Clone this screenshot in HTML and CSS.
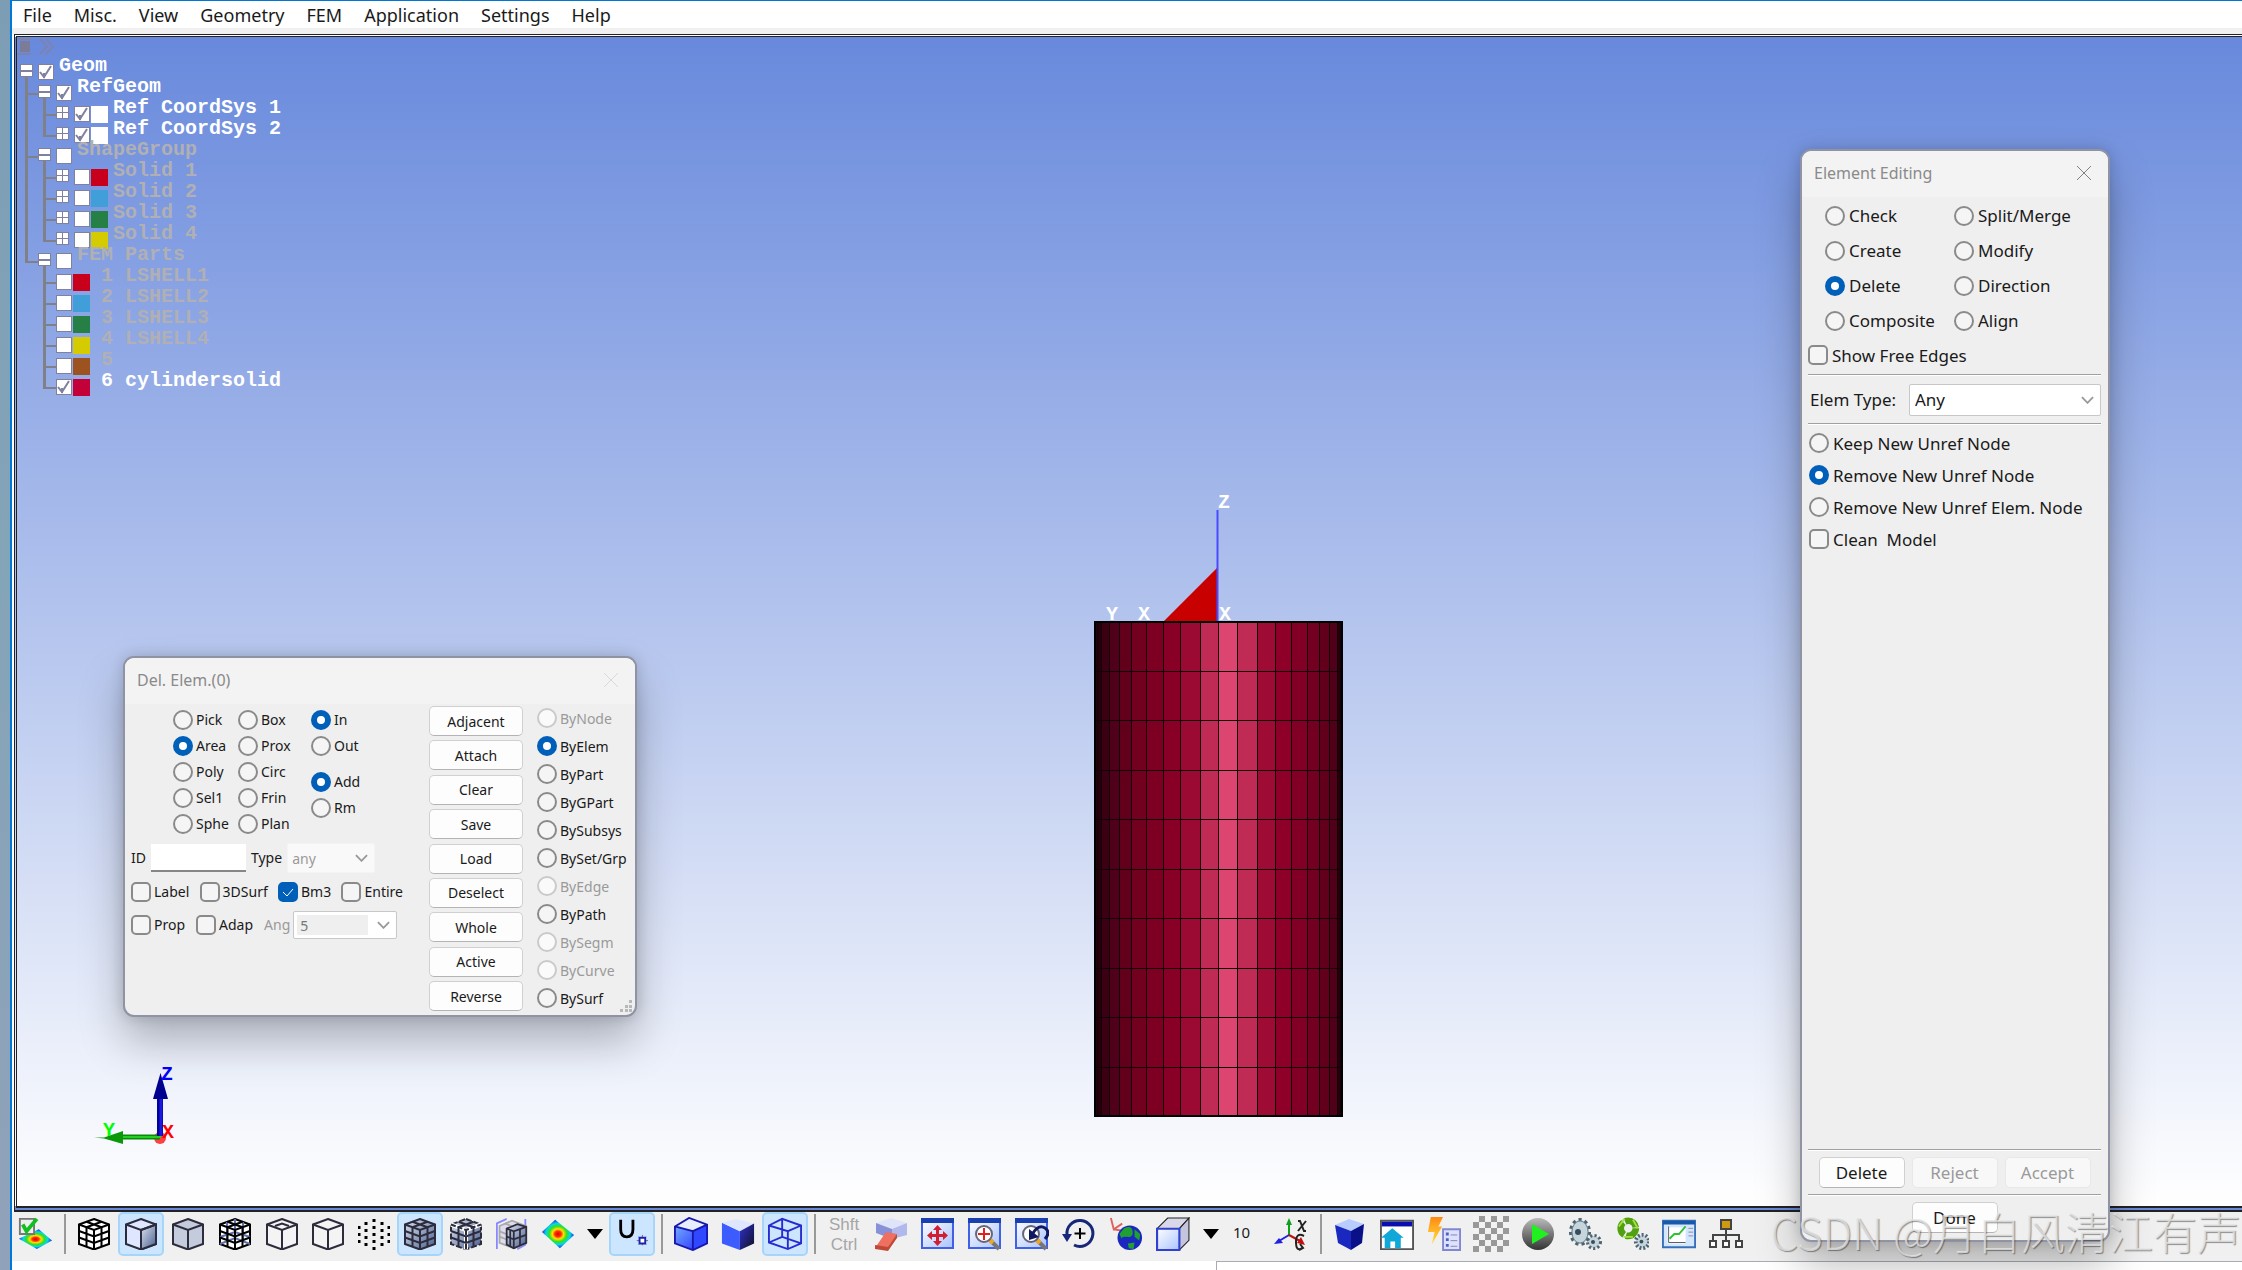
FILE: index.html
```html
<!DOCTYPE html>
<html lang="en">
<head>
  <meta charset="UTF-8" />
  <meta name="viewport" content="width=device-width, initial-scale=1.0" />
  <title>Element Editing</title>
  <link rel="stylesheet" href="styles.css">
</head>
<body>
  <!-- shared icon parts -->
  <svg class="defs" aria-hidden="true">
    <defs>
      <radialGradient id="rainbow">
        <stop offset="0" stop-color="#e00000"/><stop offset=".2" stop-color="#ff3000"/>
        <stop offset=".35" stop-color="#ffe000"/><stop offset=".55" stop-color="#30e020"/>
        <stop offset=".75" stop-color="#00d8e8"/><stop offset="1" stop-color="#2030e0"/>
      </radialGradient>
      <linearGradient id="steel" x1="0" y1="0" x2="1" y2="1"><stop offset="0" stop-color="#dce3f2"/><stop offset="1" stop-color="#4a5f8e"/></linearGradient>
      <linearGradient id="pale" x1="0" y1="0" x2="1" y2="1"><stop offset="0" stop-color="#fff"/><stop offset="1" stop-color="#a9c2ff"/></linearGradient>
      <linearGradient id="blue" x1="0" y1="0" x2="1" y2="1"><stop offset="0" stop-color="#7fc0ff"/><stop offset="1" stop-color="#2020ff"/></linearGradient>
      <linearGradient id="dark" x1="0" y1="0" x2="1" y2="1"><stop offset="0" stop-color="#3030d0"/><stop offset="1" stop-color="#101020"/></linearGradient>
      <linearGradient id="bolt" x1="0" y1="0" x2="0" y2="1"><stop offset="0" stop-color="#ff8a10"/><stop offset="1" stop-color="#ffe040"/></linearGradient>
      <linearGradient id="ball" x1="0" y1="0" x2="0" y2="1"><stop offset="0" stop-color="#bbb"/><stop offset="1" stop-color="#333"/></linearGradient>
      <path id="hex" d="M16 1 31 6.500V26L16 31.500 1 26V6.500Z"/>
      <path id="edges" d="M1 6.500 16 12 31 6.500M16 12V31.500"/>
      <path id="mesh" d="M8.500 3.800 23.500 9.200V28.800M23.500 3.800 8.500 9.200V28.800M1 13 16 18.500 31 13M1 19.500 16 25 31 19.500"/>
      <g id="window">
        <rect x="1" y="2" width="31" height="29" fill="url(#pale)" stroke="#4060e8" stroke-width="2"/>
        <path d="M0 1H33V6H0Z" fill="#1a3fae"/>
      </g>
      <g id="lens">
        <path d="M22 23 31 32" stroke="#777" stroke-width="4"/><path d="M21 22 25 26" stroke="#f0a820" stroke-width="4"/>
        <circle cx="16" cy="17" r="8" fill="#fff" stroke="#667" stroke-width="2"/>
      </g>
      <g id="gear">
        <ellipse cx="12" cy="15" rx="9" ry="12" fill="#b9cad2" stroke="#4d6470" stroke-width="4" stroke-dasharray="3 3"/>
        <ellipse cx="12" cy="15" rx="8" ry="11" fill="#c6d5dc" stroke="#6f8794"/><circle cx="10" cy="15" r="3" fill="#3b4d58"/>
        <circle cx="26" cy="25" r="6" fill="#b9cad2" stroke="#4d6470" stroke-width="4" stroke-dasharray="2 2"/>
        <circle cx="26" cy="25" r="5" fill="#c6d5dc"/><circle cx="25" cy="25" r="2" fill="#3b4d58"/>
      </g>
    </defs>
  </svg>

  <div class="desktop-edge"></div>

  <div class="app">
    <nav class="menubar">
      <a href="#">File</a>
      <a href="#">Misc.</a>
      <a href="#">View</a>
      <a href="#">Geometry</a>
      <a href="#">FEM</a>
      <a href="#">Application</a>
      <a href="#">Settings</a>
      <a href="#">Help</a>
    </nav>

    <main class="viewport">
      <div class="tree-tools">
        <svg width="40" height="18" viewBox="0 0 40 18" fill="none" stroke="#7d83b0">
          <path d="M0 2H14M0 17H14" stroke-width="2"/><path d="M3 4H13V15H3Z" fill="#7c7c98" stroke="none"/>
          <path d="M23 2 30 9.500 23 17M29 2 36 9.500 29 17" stroke-width="2"/>
        </svg>
      </div>

      <ul class="tree">
        <li>
          <div class="node on"><button class="toggle minus" aria-label="Collapse"></button><input type="checkbox" id="t0" checked><label for="t0">Geom</label></div>
          <ul>
            <li>
              <div class="node on"><button class="toggle minus" aria-label="Collapse"></button><input type="checkbox" id="t1" checked><label for="t1">RefGeom</label></div>
              <ul>
                <li><div class="node on"><button class="toggle plus" aria-label="Expand"></button><input type="checkbox" id="t2" checked><span class="swatch white"></span><label for="t2">Ref CoordSys 1</label></div></li>
                <li><div class="node on"><button class="toggle plus" aria-label="Expand"></button><input type="checkbox" id="t3" checked><span class="swatch white"></span><label for="t3">Ref CoordSys 2</label></div></li>
              </ul>
            </li>
            <li>
              <div class="node"><button class="toggle minus" aria-label="Collapse"></button><input type="checkbox" id="t4"><label for="t4">ShapeGroup</label></div>
              <ul>
                <li><div class="node"><button class="toggle plus" aria-label="Expand"></button><input type="checkbox" id="t5"><span class="swatch red"></span><label for="t5">Solid 1</label></div></li>
                <li><div class="node"><button class="toggle plus" aria-label="Expand"></button><input type="checkbox" id="t6"><span class="swatch sky"></span><label for="t6">Solid 2</label></div></li>
                <li><div class="node"><button class="toggle plus" aria-label="Expand"></button><input type="checkbox" id="t7"><span class="swatch green"></span><label for="t7">Solid 3</label></div></li>
                <li><div class="node"><button class="toggle plus" aria-label="Expand"></button><input type="checkbox" id="t8"><span class="swatch yellow"></span><label for="t8">Solid 4</label></div></li>
              </ul>
            </li>
            <li>
              <div class="node"><button class="toggle minus" aria-label="Collapse"></button><input type="checkbox" id="t9"><label for="t9">FEM Parts</label></div>
              <ul class="parts">
                <li><div class="node"><input type="checkbox" id="p1"><span class="swatch red"></span><label for="p1">1 LSHELL1</label></div></li>
                <li><div class="node"><input type="checkbox" id="p2"><span class="swatch sky"></span><label for="p2">2 LSHELL2</label></div></li>
                <li><div class="node"><input type="checkbox" id="p3"><span class="swatch green"></span><label for="p3">3 LSHELL3</label></div></li>
                <li><div class="node"><input type="checkbox" id="p4"><span class="swatch yellow"></span><label for="p4">4 LSHELL4</label></div></li>
                <li><div class="node"><input type="checkbox" id="p5"><span class="swatch brown"></span><label for="p5">5</label></div></li>
                <li><div class="node on"><input type="checkbox" id="p6" checked><span class="swatch crimson"></span><label for="p6">6 cylindersolid</label></div></li>
              </ul>
            </li>
          </ul>
        </li>
      </ul>

      <!-- meshed cylinder -->
      <svg class="model" width="260" height="640" viewBox="1090 485 260 640">
        <path d="M1164 621 1217 568V621Z" fill="#c80000"/>
        <path d="M1217.500 510V621" stroke="#4a4aff" stroke-width="2"/>
        <g class="axis-name" fill="#fff">
          <text x="1218" y="508">Z</text><text x="1106" y="620">Y</text><text x="1138" y="620">X</text><text x="1219" y="620">X</text>
        </g>
        <g shape-rendering="crispEdges">
          <rect x="1094" y="621" width="249" height="496" fill="#250009"/>
          <rect x="1101" y="621" width="8" height="496" fill="#3c0013"/>
          <rect x="1109" y="621" width="10" height="496" fill="#500019"/>
          <rect x="1119" y="621" width="12" height="496" fill="#62001c"/>
          <rect x="1131" y="621" width="15" height="496" fill="#72001f"/>
          <rect x="1146" y="621" width="17" height="496" fill="#7d0023"/>
          <rect x="1163" y="621" width="17" height="496" fill="#880026"/>
          <rect x="1180" y="621" width="20" height="496" fill="#9a0a32"/>
          <rect x="1200" y="621" width="18" height="496" fill="#c02b56"/>
          <rect x="1218" y="621" width="19" height="496" fill="#dd4571"/>
          <rect x="1237" y="621" width="20" height="496" fill="#c02b56"/>
          <rect x="1257" y="621" width="18" height="496" fill="#9e0b35"/>
          <rect x="1275" y="621" width="16" height="496" fill="#8f0029"/>
          <rect x="1291" y="621" width="16" height="496" fill="#820025"/>
          <rect x="1307" y="621" width="12" height="496" fill="#740021"/>
          <rect x="1319" y="621" width="10" height="496" fill="#62001c"/>
          <rect x="1329" y="621" width="8" height="496" fill="#500019"/>
          <path d="M1097 621V1117M1101 621V1117M1109 621V1117M1119 621V1117M1131 621V1117M1146 621V1117M1163 621V1117M1180 621V1117M1200 621V1117M1218 621V1117M1237 621V1117M1257 621V1117M1275 621V1117M1291 621V1117M1307 621V1117M1319 621V1117M1329 621V1117M1337 621V1117M1340 621V1117" stroke="#12000a" stroke-width="1"/>
          <path d="M1094 671H1343M1094 720H1343M1094 770H1343M1094 819H1343M1094 869H1343M1094 918H1343M1094 968H1343M1094 1017H1343M1094 1067H1343" stroke="#12000a" stroke-width="1"/>
          <rect x="1095" y="622" width="247" height="494" fill="none" stroke="#000" stroke-width="2"/>
        </g>
      </svg>

      <!-- orientation triad -->
      <svg class="triad" width="90" height="90" viewBox="90 1060 90 90">
        <circle cx="160" cy="1138" r="6" fill="#ff4040"/>
        <path d="M160 1137H123" stroke="#0a8a0a" stroke-width="5"/><path d="M161 1137H123" stroke="#20d020" stroke-width="2"/>
        <path d="M94 1137.500H104L123 1131V1144L104 1138.500" fill="#0a980a"/>
        <path d="M160 1136V1098" stroke="#00009a" stroke-width="6"/><path d="M161 1136V1098" stroke="#1a1ae0" stroke-width="3"/>
        <path d="M160.500 1073 153 1099H168Z" fill="#000090"/>
        <g class="axis-name"><text x="161" y="1080" fill="#0000ff">Z</text><text x="103" y="1136" fill="#00ff00">Y</text><text x="162" y="1138" fill="#ff0000">X</text></g>
      </svg>
    </main>

    <footer class="toolbar">
      <div class="tools">
        <button class="tool first" aria-label="Contour check"><svg viewBox="0 0 36 36"><path d="M1 23 22 13 36 25 20 34Z" fill="url(#rainbow)"/><path d="M2 2H17V18H2Z" fill="#eee" stroke="#777" stroke-width="2"/><path d="M5 8 9 15 20 2" fill="none" stroke="#10c020" stroke-width="4"/></svg></button>
      </div>
      <span class="sep"></span>
      <div class="tools spaced">
        <button class="tool" aria-label="Wireframe mesh"><svg viewBox="0 0 32 32" class="line black"><use href="#hex" fill="#fff"/><use href="#edges"/><use href="#mesh"/></svg></button>
        <button class="tool active" aria-label="Shaded"><svg viewBox="0 0 32 32" class="line"><use href="#hex" fill="#dfe6ff"/><path d="M16 12 31 6.500V26L16 31.500Z" fill="url(#steel)"/><use href="#edges"/></svg></button>
        <button class="tool" aria-label="Flat"><svg viewBox="0 0 32 32" class="line"><use href="#hex" fill="#c3cbdc"/><use href="#edges"/></svg></button>
        <button class="tool" aria-label="Transparent mesh"><svg viewBox="0 0 32 32" class="line black"><use href="#hex" fill="#fff"/><path d="M1 26 16 20 31 26M16 1V20M8 4V24M24 4V24M1 19 16 14 31 19" stroke="#6070a8"/><use href="#edges"/><use href="#mesh"/></svg></button>
        <button class="tool" aria-label="Feature edges"><svg viewBox="0 0 32 32" class="line"><use href="#hex" fill="#f4f4f4"/><use href="#edges"/><path d="M9 8 16 5.500 23 8"/></svg></button>
      </div>
      <div class="tools">
        <button class="tool" aria-label="Outline"><svg viewBox="0 0 32 32" class="line"><use href="#hex" fill="#f4f4f4"/><use href="#edges"/></svg></button>
        <button class="tool" aria-label="Nodes"><svg viewBox="0 0 32 32" class="line black dots"><path d="M1 8V27M8 4V30M16 1V32M24 4V30M31 8V27"/></svg></button>
        <button class="tool active" aria-label="Shaded mesh"><svg viewBox="0 0 32 32" class="line"><use href="#hex" fill="url(#steel)"/><use href="#edges"/><use href="#mesh"/></svg></button>
        <button class="tool" aria-label="Shrink"><svg viewBox="0 0 32 32" class="line"><use href="#hex" fill="url(#steel)" stroke-dasharray="6 2"/><use href="#edges" stroke="#fff" stroke-width="4"/><use href="#mesh"/><use href="#edges" stroke-dasharray="5 2"/></svg></button>
        <button class="tool" aria-label="Section"><svg viewBox="0 0 36 36" class="line"><path d="M1 35V6L12 1M33 1V30L24 35" stroke="#8888ff" fill="none"/><path d="M4 9 18 3 34 9V28L20 34 4 28Z" fill="#dde" stroke="#aaa"/><path d="M4 15 14 19M4 21 14 25M10 6 24 12" stroke="#aaa"/><path d="M12 12 24 7 34 10V28L20 34 12 30Z" fill="url(#steel)"/><path d="M12 12 20 15 34 10M20 15V34M27 12V31M12 21 20 24 34 19M16 13V32"/></svg></button>
        <button class="tool" aria-label="Contour"><svg viewBox="0 0 36 32"><path d="M15 1 35 17 20 31 1 14Z" fill="url(#rainbow)"/></svg></button>
        <button class="drop" aria-label="More contours"></button>
        <button class="tool active" aria-label="Undeformed"><svg viewBox="0 0 36 34"><path d="M6 2V12Q6 20 12.500 20T19 12V2" fill="none" stroke="#000" stroke-width="3"/><path d="M29 18V29M23 24H35M25 20 33 28M33 20 25 28" stroke="#667" /><path d="M26 21H32V27H26Z" fill="#fff" stroke="#2020b0" stroke-width="2"/></svg></button>
      </div>
      <span class="sep"></span>
      <div class="tools spaced">
        <button class="tool" aria-label="Solid with edges"><svg viewBox="0 0 36 36"><path d="M1 10 16 1 35 8V28L20 35 1 28Z" fill="url(#blue)"/><path d="M1 10 16 1 35 8 20 15Z" fill="#e6eeff"/><path d="M20 15 35 8V28L20 35Z" fill="#3048ff"/><path d="M1 10 16 1 35 8V28L20 35 1 28ZM1 10 20 15 35 8M20 15V35" fill="none" stroke="#1818b0" stroke-width="2"/></svg></button>
        <button class="tool" aria-label="Solid"><svg viewBox="0 0 36 34"><path d="M1 5 20 14V34L1 27Z" fill="#3c5cff"/><path d="M1 5 16 1 35 6 20 14Z" fill="#dfe6ff"/><path d="M20 14 35 6V27L20 34Z" fill="url(#dark)"/></svg></button>
        <button class="tool active" aria-label="Wireframe solid"><svg viewBox="0 0 36 34" fill="none" stroke="#2a2ad0" stroke-width="2"><path d="M1 8 15 1 35 8V27L21 33 1 26ZM1 8 21 14 35 8M21 14V33M15 1V20L1 26M15 20 35 27"/></svg></button>
      </div>
      <span class="sep"></span>
      <div class="tools spaced">
        <div class="modkeys"><span>Shft</span><span>Ctrl</span></div>
        <button class="tool" aria-label="Erase"><svg viewBox="0 0 34 34"><path d="M2 6 17 1 33 6 18 12Z" fill="#dfe4fa"/><path d="M2 6 18 12V22L2 16Z" fill="#8890d8"/><path d="M18 12 33 6V18L18 22Z" fill="#b0b8ec"/><path d="M12 15 23 17 14 33 1 31Z" fill="#ee7060"/><path d="M1 28 14 30 23 17V21L14 34 1 32Z" fill="#c04838"/></svg></button>
        <button class="tool" aria-label="Fit view"><svg viewBox="0 0 34 34"><use href="#window"/><path d="M16.500 8 21 13H18V17H22V14L27 18.500 22 23V20H18V24H21L16.500 29 12 24H15V20H11V23L6 18.500 11 14V17H15V13H12Z" fill="#d02030"/></svg></button>
        <button class="tool" aria-label="Zoom"><svg viewBox="0 0 34 34"><use href="#window"/><use href="#lens"/><path d="M16 11V23M10 17H22" stroke="#e02020" stroke-width="2"/></svg></button>
        <button class="tool" aria-label="Previous zoom"><svg viewBox="0 0 34 34"><use href="#window"/><use href="#lens"/><path d="M18 16Q24 7 30 11T30 22" fill="none" stroke="#101860" stroke-width="3"/><path d="M14 12V23L24 20Z" fill="#101860"/></svg></button>
        <button class="tool" aria-label="Rotate"><svg viewBox="0 0 34 34"><path d="M5 18A13 13 0 1 1 12 28" fill="none" stroke="#182878" stroke-width="3"/><path d="M0 17H10L5 25Z" fill="#182878"/><path d="M18 11V22M12.500 16.500H23.500" stroke="#000" stroke-width="2"/></svg></button>
        <button class="tool" aria-label="World axes"><svg viewBox="0 0 36 36"><path d="M2 1 5 13 14 7M5 13 16 15" fill="none" stroke="#e06060" stroke-width="2"/><circle cx="22" cy="22" r="13" fill="#1a28c0"/><path d="M16 12Q24 8 25 15T19 21 14 24 11 18ZM27 13 33 18 32 25 27 21ZM20 28 27 27 26 34 21 33Z" fill="#20a030"/></svg></button>
        <button class="tool" aria-label="View cube"><svg viewBox="0 0 32 32" stroke="#222" stroke-width="1"><path d="M1 11 11 1H31L22 11Z" fill="#d8d8e8"/><path d="M22 11 31 1V22L22 31Z" fill="#c4c4dc"/><path d="M1 11H22V31H1Z" fill="url(#pale)" stroke="#3040d0" stroke-width="2"/></svg></button>
        <button class="drop" aria-label="More views"></button>
      </div>
      <span class="step">10</span>
      <button class="tool axes" aria-label="Rotate about X"><svg viewBox="0 0 34 34"><path d="M15 18V5" stroke="#10a020" stroke-width="2"/><path d="M12 8 15 1 18 8Z" fill="#10a020"/><path d="M15 18 5 24" stroke="#2020e0" stroke-width="2"/><path d="M0 27 5 21 9 26Z" fill="#2020e0"/><path d="M15 18 26 24" stroke="#c01010" stroke-width="2"/><path d="M31 28 27 20 23 26Z" fill="#c01010"/><path d="M24 4H26L30 14H32M32 4 24 14M30 19Q22 15 22 25T28 31M25 33 29 31 26 27" fill="none" stroke="#222" stroke-width="2"/></svg></button>
      <span class="sep"></span>
      <div class="tools spaced">
        <button class="tool" aria-label="Block"><svg viewBox="0 0 32 34"><path d="M1 8 15 2 30 7 17 14Z" fill="#b9ccff"/><path d="M1 8 17 14V33L4 26Z" fill="#1a28c0"/><path d="M17 14 30 7 28 26 17 33Z" fill="#0a1088"/></svg></button>
        <button class="tool" aria-label="Home window"><svg viewBox="0 0 36 34"><path d="M1 3H35V33H1Z" fill="#fff" stroke="#555" stroke-width="2"/><path d="M2 4H34V9H2Z" fill="#0a10b0"/><path d="M13 11 25 21H22V32H16V25H11V32H5V21H1Z" fill="#10a8d8"/></svg></button>
        <button class="tool" aria-label="Quick list"><svg viewBox="0 0 36 36"><path d="M4 0H17L12 10H16L5 29 8 16H1Z" fill="url(#bolt)"/><path d="M17 13H35V35H17Z" fill="#dde0ff" stroke="#8088d0" stroke-width="2"/><path d="M20 18H23M20 24H23M20 30H23" stroke="#5060c0" stroke-width="3"/><path d="M25 19H32M25 25H32M25 31H32" stroke="#8088a0"/></svg></button>
        <button class="tool" aria-label="Checker"><span class="checker"></span></button>
        <button class="tool" aria-label="Run"><svg viewBox="0 0 34 34"><circle cx="17" cy="17" r="16" fill="url(#ball)"/><path d="M11 7 28 17 11 27Z" fill="#20f020"/></svg></button>
        <button class="tool" aria-label="Settings"><svg viewBox="0 0 34 34"><use href="#gear"/></svg></button>
        <button class="tool" aria-label="Update"><svg viewBox="0 0 36 36"><g transform="translate(3 3)"><circle cx="26" cy="23" r="7" fill="#c6d5dc" stroke="#4d6470" stroke-width="4" stroke-dasharray="2 2"/><circle cx="25" cy="23" r="2" fill="#3b4d58"/></g><circle cx="14" cy="12" r="8" fill="#efefef" stroke="#50a010" stroke-width="7" stroke-dasharray="15 2"/><path d="M4 10 10 2M19 3 24 12M9 21H19" stroke="#a0e040" stroke-width="2"/></svg></button>
        <button class="tool" aria-label="Graph"><svg viewBox="0 0 36 30"><path d="M1 1H35V29H1Z" fill="#d4e6ff" stroke="#3870b8" stroke-width="2"/><path d="M1 1H35V5H1Z" fill="#1858a8"/><path d="M6 8H25V25H6Z" fill="#fff"/><path d="M7 7V24H25" fill="none" stroke="#555"/><path d="M8 20 13 15H18L25 7" fill="none" stroke="#30c030" stroke-width="2"/><path d="M28 9H33M28 13H33M28 17H33" stroke="#889"/></svg></button>
        <button class="tool" aria-label="Hierarchy"><svg viewBox="0 0 34 30" fill="none" stroke="#444" stroke-width="2"><path d="M12 1H22V10H12Z" fill="#d09a10"/><path d="M17 10V21M4 21V16H30V21"/><path d="M1 22H7V28H1ZM14 22H20V28H14ZM27 22H33V28H27Z" fill="#fff"/></svg></button>
      </div>
    </footer>
    <div class="below"><span class="below-pane"></span></div>
  </div>

  <!-- selection dialog -->
  <section class="dialog del-elem">
    <header><h2>Del. Elem.(0)</h2><button class="close" aria-label="Close" disabled><svg viewBox="0 0 16 16"><path d="M1 1 15 15M15 1 1 15"/></svg></button></header>
    <div class="del-body">
      <div class="del-left">
        <div class="picks">
          <div class="stack">
            <label><input type="radio" name="pick">Pick</label>
            <label><input type="radio" name="pick" checked>Area</label>
            <label><input type="radio" name="pick">Poly</label>
            <label><input type="radio" name="pick">Sel1</label>
            <label><input type="radio" name="pick">Sphe</label>
          </div>
          <div class="stack wide">
            <label><input type="radio" name="pick">Box</label>
            <label><input type="radio" name="pick">Prox</label>
            <label><input type="radio" name="pick">Circ</label>
            <label><input type="radio" name="pick">Frin</label>
            <label><input type="radio" name="pick">Plan</label>
          </div>
          <div class="stack">
            <label><input type="radio" name="side" checked>In</label>
            <label><input type="radio" name="side">Out</label>
            <label class="apart"><input type="radio" name="mode" checked>Add</label>
            <label><input type="radio" name="mode">Rm</label>
          </div>
        </div>
        <div class="id-row">
          <label for="elem-id">ID</label><input type="text" id="elem-id">
          <label for="elem-kind">Type</label><select id="elem-kind" disabled><option>any</option></select>
        </div>
        <div class="checks">
          <label><input type="checkbox">Label</label>
          <label><input type="checkbox">3DSurf</label>
          <label><input type="checkbox" checked>Bm3</label>
          <label><input type="checkbox">Entire</label>
        </div>
        <div class="checks second">
          <label><input type="checkbox">Prop</label>
          <label><input type="checkbox">Adap</label>
          <span class="angle"><label for="angle" class="off">Ang</label><select id="angle" disabled><option>5</option></select></span>
        </div>
      </div>
      <div class="actions">
        <button>Adjacent</button>
        <button>Attach</button>
        <button>Clear</button>
        <button>Save</button>
        <button>Load</button>
        <button>Deselect</button>
        <button>Whole</button>
        <button>Active</button>
        <button>Reverse</button>
      </div>
      <div class="by">
        <label class="off"><input type="radio" name="by" disabled>ByNode</label>
        <label><input type="radio" name="by" checked>ByElem</label>
        <label><input type="radio" name="by">ByPart</label>
        <label><input type="radio" name="by">ByGPart</label>
        <label><input type="radio" name="by">BySubsys</label>
        <label><input type="radio" name="by">BySet/Grp</label>
        <label class="off"><input type="radio" name="by" disabled>ByEdge</label>
        <label><input type="radio" name="by">ByPath</label>
        <label class="off"><input type="radio" name="by" disabled>BySegm</label>
        <label class="off"><input type="radio" name="by" disabled>ByCurve</label>
        <label><input type="radio" name="by">BySurf</label>
      </div>
    </div>
    <svg class="grip" viewBox="0 0 12 12" fill="#b8b8b8"><path d="M9 0H12V3H9ZM9 5H12V8H9ZM5 5H8V8H5ZM9 9H12V12H9ZM5 9H8V12H5ZM0 9H3V12H0Z"/></svg>
  </section>

  <!-- element editing dialog -->
  <section class="dialog editing">
    <header><h2>Element Editing</h2><button class="close" aria-label="Close"><svg viewBox="0 0 16 16"><path d="M1 1 15 15M15 1 1 15"/></svg></button></header>
    <div class="edit-body">
      <div class="modes">
        <label><input type="radio" name="op">Check</label>
        <label><input type="radio" name="op">Split/Merge</label>
        <label><input type="radio" name="op">Create</label>
        <label><input type="radio" name="op">Modify</label>
        <label><input type="radio" name="op" checked>Delete</label>
        <label><input type="radio" name="op">Direction</label>
        <label><input type="radio" name="op">Composite</label>
        <label><input type="radio" name="op">Align</label>
      </div>
      <label class="free-edges"><input type="checkbox">Show Free Edges</label>
      <hr>
      <div class="elem-type"><label for="elem-type">Elem Type:</label><select id="elem-type"><option>Any</option></select></div>
      <hr>
      <div class="unref">
        <label><input type="radio" name="unref">Keep New Unref Node</label>
        <label><input type="radio" name="unref" checked>Remove New Unref Node</label>
        <label><input type="radio" name="unref">Remove New Unref Elem. Node</label>
        <label class="clean"><input type="checkbox">Clean&nbsp; Model</label>
      </div>
      <div class="edit-foot">
        <hr>
        <div class="buttons"><button>Delete</button><button disabled>Reject</button><button disabled>Accept</button></div>
        <hr>
        <div class="buttons"><button>Done</button></div>
      </div>
    </div>
  </section>

  <div class="watermark">CSDN @月白风清江有声</div>
</body>
</html>
```
FILE: styles.css
```css
:root {
  --ui: "Noto Sans", "Open Sans", sans-serif;
  --panel: #efefef;
  --accent: #005fb8;
  --ink: #1a1a1a;
  --muted: #9a9a9a;
}

* {
  box-sizing: border-box;
}

body {
  margin: 0;
  height: 100vh;
  display: flex;
  overflow: hidden;
  position: relative;
  font-family: var(--ui);
  color: var(--ink);
  background: #fff;
}

button,
input,
select {
  font: inherit;
  color: inherit;
  margin: 0;
}

.defs {
  position: absolute;
  width: 0;
  height: 0;
}

.desktop-edge {
  width: 10px;
  background: linear-gradient(#7c9db4, #84a4b8 45%, #90a2ba);
}

.app {
  flex: 1;
  min-width: 0;
  display: flex;
  flex-direction: column;
  border-left: 2px solid #0078d7;
  border-top: 1px solid #0078d7;
}

/* menu */
.menubar {
  display: flex;
  gap: 22px;
  padding-left: 11px;
  height: 33px;
  border-bottom: 6px solid #f0f0f0;
  font-size: 18px;
  line-height: 28px;
}

.menubar a {
  color: var(--ink);
  text-decoration: none;
}

/* 3d view */
.viewport {
  flex: 1;
  margin-left: 2px;
  position: relative;
  border: 3px double #222;
  border-right: 0;
  border-bottom: 6px double #222;
  background: linear-gradient(#6889dc, #fff);
}

.model {
  position: absolute;
  left: 1073px;
  top: 448px;
}

.triad {
  position: absolute;
  left: 73px;
  bottom: 56px;
}

.axis-name {
  font: bold 20px "Liberation Mono", monospace;
}

/* tree */
.tree-tools {
  height: 18px;
}

.tree-tools svg {
  display: block;
}

.tree,
.tree ul {
  list-style: none;
  margin: 0;
  padding: 0;
}

.tree {
  padding-left: 3px;
  font: bold 20px/22px "Liberation Mono", monospace;
  width: 320px;
}

.tree ul {
  padding-left: 18px;
}

.tree li {
  position: relative;
}

.tree ul > li::before {
  content: "";
  position: absolute;
  left: -13px;
  top: 0;
  width: 13px;
  height: 17px;
  border-left: 3px solid #808088;
  border-bottom: 2px solid #808088;
}

.tree ul > li:not(:last-child)::after {
  content: "";
  position: absolute;
  left: -13px;
  top: 0;
  bottom: 0;
  width: 3px;
  background: #808088;
}

.node {
  display: flex;
  align-items: flex-start;
  height: 21px;
  color: #b0b0b4;
  position: relative;
  z-index: 1;
}

.node.on {
  color: #fff;
}

.toggle {
  width: 13px;
  height: 13px;
  margin: 9px 5px 0 0;
  padding: 0;
  border: 1px solid #8080a0;
  background: #fff linear-gradient(#8080a0, #8080a0) center / 100% 2px no-repeat;
}

.toggle.plus {
  background: linear-gradient(#8080a0, #8080a0) center / 100% 1px no-repeat, linear-gradient(#8080a0, #8080a0) center / 1px 100% no-repeat, #fff;
}

.node input {
  appearance: none;
  width: 16px;
  height: 16px;
  margin: 9px 0 0;
  border: 1px solid #8080a0;
  background: #fff;
}

.node input:checked {
  background: #fff url("data:image/svg+xml,%3Csvg xmlns='http://www.w3.org/2000/svg' viewBox='0 0 14 14'%3E%3Cpath d='M1 7 5 12 12 1M5 13V8' fill='none' stroke='%238080a0' stroke-width='2'/%3E%3C/svg%3E");
}

.swatch {
  width: 17px;
  height: 17px;
  margin: 9px 0 0 1px;
}

.swatch.white { background: #fff; }
.swatch.red { background: #c8001c; }
.swatch.sky { background: #409fd8; }
.swatch.green { background: #268045; }
.swatch.yellow { background: #d4cc00; }
.swatch.brown { background: #9c5320; }
.swatch.crimson { background: #c40038; }

.node label {
  margin-left: 5px;
  white-space: pre;
}

.parts .node label {
  margin-left: 11px;
}

/* toolbar */
.toolbar {
  display: flex;
  height: 49px;
  background: #f0f0f0;
  align-items: flex-start;
}

.tools {
  display: flex;
}

.tools.spaced {
  gap: 1px;
}

.tool {
  width: 46px;
  height: 44px;
  padding: 0;
  display: grid;
  place-items: center;
  border: 2px solid transparent;
  border-radius: 5px;
  background: none;
}

.tool svg {
  width: 34px;
  height: 34px;
}

.tool svg.line {
  width: 32px;
  height: 32px;
  fill: none;
  stroke: #2c2c3c;
  stroke-width: 2;
}

.tool svg.black {
  stroke: #000;
}

.tool svg.dots {
  stroke-width: 3;
  stroke-dasharray: 3 4;
}

.tool.active {
  background: #cce6ff;
  border-color: #a6d5fb;
}

.sep {
  width: 2px;
  height: 40px;
  margin: 2px 5px 0 6px;
  background: #999;
}

.tools .drop {
  width: 28px;
  height: 44px;
  padding: 0;
  border: 0;
  background: none;
  display: grid;
  place-items: center;
}

.drop::before {
  content: "";
  border: 8px solid transparent;
  border-top: 10px solid #000;
  border-bottom: 0;
}

.modkeys {
  width: 46px;
  display: flex;
  flex-direction: column;
  align-items: center;
  font: 17px/20px "Liberation Sans", sans-serif;
  color: #a6a6a6;
  padding-top: 3px;
}

.step {
  font-size: 15px;
  line-height: 40px;
  margin: 0 18px 0 8px;
}

.checker {
  width: 36px;
  height: 36px;
  background: repeating-conic-gradient(#999 0 25%, #f2f2f2 0 50%) 0 0 / 12px 12px;
}

.below {
  height: 9px;
  display: flex;
  justify-content: flex-end;
}

.below-pane {
  width: 46%;
  border-left: 1px solid #aaaab4;
  border-top: 1px solid #aaaab4;
}

/* dialogs */
.dialog {
  position: absolute;
  display: flex;
  flex-direction: column;
  background: var(--panel);
  border: 2px solid #8f93a3;
  border-radius: 11px;
  background-clip: padding-box;
  box-shadow: 0 24px 44px rgba(0, 0, 0, 0.26), 0 0 14px rgba(0, 0, 0, 0.16);
}

.dialog header {
  display: flex;
  align-items: center;
  justify-content: space-between;
  height: 46px;
  padding: 0 16px 2px 12px;
  background: #f3f3f3;
  border-radius: 9px 9px 0 0;
}

.dialog h2 {
  margin: 0;
  font-size: 16px;
  font-weight: 400;
  color: #8a8a8a;
}

.close {
  padding: 0;
  border: 0;
  background: none;
  line-height: 0;
}

.close svg {
  width: 16px;
  height: 16px;
  fill: none;
  stroke: #808080;
}

.close:disabled svg {
  stroke: #d8d8d8;
}

.dialog label {
  display: flex;
  align-items: center;
  gap: 4px;
  white-space: nowrap;
}

.dialog input[type="radio"],
.dialog input[type="checkbox"] {
  appearance: none;
  flex: none;
  width: 20px;
  height: 20px;
  border: 2px solid #8a8a8a;
  border-radius: 50%;
  background: #f5f5f5;
}

.dialog input[type="checkbox"] {
  border-radius: 5px;
}

.dialog input[type="radio"]:checked {
  border: 6px solid var(--accent);
  background: #fff;
}

.dialog input[type="checkbox"]:checked {
  border-color: var(--accent);
  background: var(--accent) url("data:image/svg+xml,%3Csvg xmlns='http://www.w3.org/2000/svg' viewBox='0 0 16 16'%3E%3Cpath d='M3 8 7 12 13 5' fill='none' stroke='white'/%3E%3C/svg%3E");
}

.dialog input:disabled {
  border-color: #cacaca;
  background: #fafafa;
}

.dialog .off {
  color: var(--muted);
}

.dialog select {
  appearance: none;
  padding: 0 8px;
  border: 1px solid #c8c8c8;
  border-radius: 2px;
  background: #fff url("data:image/svg+xml,%3Csvg xmlns='http://www.w3.org/2000/svg' viewBox='0 0 14 8'%3E%3Cpath d='M1 1 7 7 13 1' fill='none' stroke='%23999999' stroke-width='2'/%3E%3C/svg%3E") right 6px center / 13px 8px no-repeat;
}

.actions button,
.buttons button {
  height: 30px;
  padding: 0;
  border: 1px solid #d0d0d0;
  border-bottom-color: #b4b4b4;
  border-radius: 5px;
  background: #fdfdfd;
}

.buttons button:disabled {
  color: var(--muted);
  border-color: #e8e8e8;
  background: #f8f8f8;
}

.del-elem {
  left: 123px;
  top: 656px;
  width: 514px;
  font-size: 14px;
}

.del-elem label {
  gap: 3px;
}

.del-body {
  display: flex;
  padding: 0 0 2px 6px;
  height: 311px;
}

.del-left {
  flex: none;
  width: 272px;
  display: flex;
  flex-direction: column;
  gap: 9px;
  padding-top: 6px;
}

.del-left label {
  line-height: 20px;
}

.picks {
  display: flex;
  padding-left: 42px;
}

.stack {
  width: 65px;
  display: flex;
  flex-direction: column;
  gap: 6px;
}

.stack.wide {
  width: 73px;
}

.stack .apart {
  margin-top: 10px;
}

.id-row {
  display: flex;
  align-items: center;
  gap: 5px;
  height: 30px;
}

.id-row input {
  width: 95px;
  height: 28px;
  border: 0;
  border-bottom: 2px solid #868686;
  background: #fff;
}

.id-row select {
  width: 88px;
  height: 30px;
  padding: 0 4px;
  color: var(--muted);
  border-color: #f4f4f4;
  background-color: #f9f9f9;
  opacity: 1;
}

.checks {
  display: flex;
  justify-content: space-between;
}

.checks.second {
  justify-content: flex-start;
  gap: 11px;
}

.angle {
  display: flex;
  gap: 3px;
}

.angle select {
  width: 104px;
  height: 28px;
  padding: 0 6px;
  color: #777;
  opacity: 1;
  box-shadow: inset 0 0 0 3px #fff, inset 74px 0 0 #efefef;
}

.actions {
  flex: none;
  width: 94px;
  margin-left: 26px;
  padding: 2px 0;
  display: flex;
  flex-direction: column;
  justify-content: space-between;
}

.by {
  margin-left: 14px;
}

.by label {
  height: 28px;
}

.grip {
  position: absolute;
  right: 3px;
  bottom: 3px;
  width: 12px;
  height: 12px;
}

.editing {
  top: 149px;
  right: 132px;
  bottom: 28px;
  width: 310px;
  font-size: 17px;
}

.edit-body {
  flex: 1;
  display: flex;
  flex-direction: column;
  padding: 1px 7px 1px 6px;
}

.dialog hr {
  width: 100%;
  height: 2px;
  margin: 0;
  border: 0;
  border-top: 1px solid #a0a0a0;
  border-bottom: 1px solid #fff;
}

.modes {
  display: grid;
  grid-template-columns: 129px 1fr;
  grid-auto-rows: 35px;
  padding-left: 17px;
}

.free-edges {
  height: 34px;
  margin-bottom: 2px;
}

.elem-type {
  display: flex;
  align-items: center;
  justify-content: space-between;
  height: 47px;
  padding-left: 2px;
}

.elem-type select {
  width: 192px;
  height: 32px;
  padding: 0 5px;
}

.unref {
  display: flex;
  flex-direction: column;
  padding: 2px 0 0 1px;
}

.unref label {
  height: 32px;
}

.edit-foot {
  margin-top: auto;
}

.edit-foot .buttons {
  display: flex;
  justify-content: center;
  gap: 7px;
  padding: 6px 0;
}

.edit-foot .buttons button {
  width: 86px;
  height: 31px;
}

.watermark {
  position: absolute;
  right: 1px;
  bottom: 8px;
  font: 44px/62px "Noto Sans CJK SC", sans-serif;
  font-weight: 300;
  color: rgba(232, 232, 232, 0.75);
  text-shadow: 1px 1px 1px rgba(0, 0, 0, 0.4);
  pointer-events: none;
}
```
